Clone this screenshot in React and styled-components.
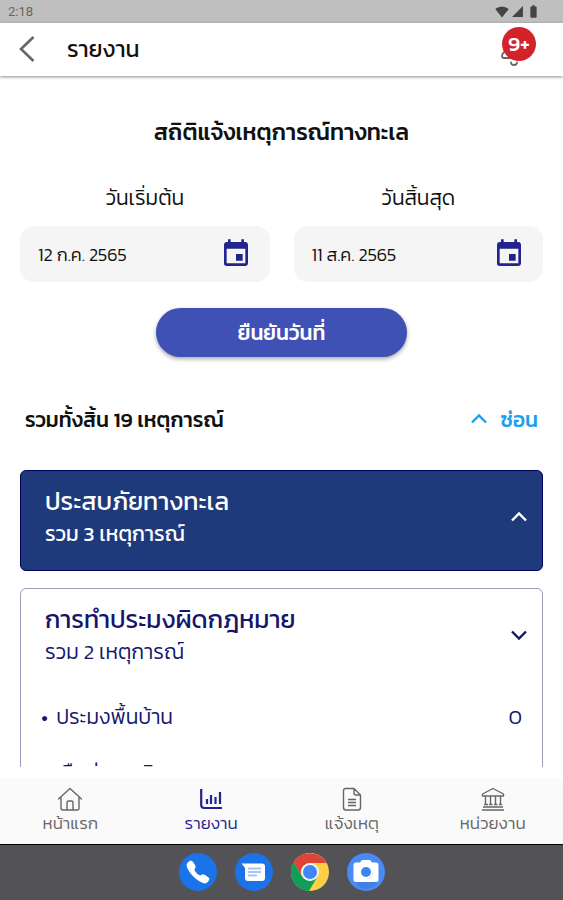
import React, { useState } from 'react'
import styled, { createGlobalStyle } from 'styled-components'
import { MdBatteryFull, MdEvent, MdSignalCellular4Bar, MdSignalWifi4Bar } from 'react-icons/md'
import { IoCall } from 'react-icons/io5'

const groups = [
  { id: 'disaster', title: 'ประสบภัยทางทะเล', total: 3, active: true, items: [] },
  {
    id: 'fishery',
    title: 'การทำประมงผิดกฎหมาย',
    total: 2,
    active: false,
    items: [
      { name: 'ประมงพื้นบ้าน', count: 0 },
      { name: 'เรือต่างชาติ', count: 0 },
    ],
  },
]

const Chevron = ({ up }) => (
  <svg width='18' height='18' viewBox='0 0 18 18' fill='none' stroke='currentColor' strokeWidth='2.4' aria-hidden='true'>
    <path d={up ? 'M2 12.5 9 5.500l7 7' : 'M2 5.500l7 7 7-7'} />
  </svg>
)

const HomeIcon = () => (
  <svg width='26' height='26' viewBox='0 0 26 26' fill='none' stroke='currentColor' strokeWidth='1.4' strokeLinejoin='round' strokeLinecap='round' aria-hidden='true'>
    <path d='M1.500 13 13 2.500 24.500 13M4 11v11q0 2 2 2h14q2 0 2-2V11M10 24v-7.500q0-1.500 1.500-1.500h3q1.500 0 1.500 1.500V24' />
  </svg>
)

const ReportIcon = () => (
  <svg width='26' height='26' viewBox='0 0 26 26' fill='none' stroke='currentColor' aria-hidden='true'>
    <path d='M3.200 3v16q0 3 3 3H24' strokeWidth='2.200' />
    <path d='M9 13v5M13 9v9M17.500 11v7M22 6v12' strokeWidth='2.200' />
  </svg>
)

const FileIcon = () => (
  <svg width='26' height='26' viewBox='0 0 26 26' fill='none' stroke='currentColor' strokeWidth='1.4' strokeLinejoin='round' aria-hidden='true'>
    <path d='M7 2.500h8l6.500 6.500v12.500q0 2.500-2.500 2.500H7q-2.500 0-2.500-2.500V5q0-2.500 2.500-2.500zM15 2.500V7q0 2 2 2h4.500M9 13.500h8M9 16.500h8M9 19.500h8' />
  </svg>
)

const BankIcon = () => (
  <svg width='26' height='26' viewBox='0 0 26 26' fill='none' stroke='currentColor' strokeWidth='1.4' strokeLinejoin='round' aria-hidden='true'>
    <path d='M2.500 8 13 2.500 23.500 8v2h-21zM5.500 10v8.500M10.500 10v8.500M15.500 10v8.500M20.500 10v8.500M4 18.500h4M9 18.500h3.500M14 18.500h3.500M19 18.500h3M3 21h20M2 24h22' />
  </svg>
)

const BellIcon = () => (
  <svg width='30' height='36' viewBox='0 0 30 36' fill='none' stroke='currentColor' strokeWidth='1.8' strokeLinecap='round' aria-hidden='true'>
    <path d='M14 4Q7 5 7 13v6q-5 3-5 6 0 2 2 2h20q2 0 2-2 0-3-5-6v-6q0-8-7-9zM11 31.500q0 2.500 3 2.500t3-2.500' />
  </svg>
)

const MessageIcon = () => (
  <svg width='38' height='38' viewBox='0 0 38 38' aria-hidden='true'>
    <circle cx='19' cy='19' r='19' fill='#1a73e8' />
    <path d='M6.500 10.500h20.500q3 0 3 3V25q0 3-3 3H13q-3 0-3-3V15z' fill='#fff' />
    <path d='M13 15.500h13M13 19h13M13 22.500h9' stroke='#a5c5f5' strokeWidth='2' />
  </svg>
)

const ChromeIcon = () => (
  <svg width='38' height='38' viewBox='0 0 38 38' aria-hidden='true'>
    <circle cx='19' cy='19' r='19' fill='#fdd045' />
    <path d='M2.500 9.500A19 19 0 0 1 35.500 10H19a9 9 0 0 0-8 13z' fill='#db4437' />
    <path d='M2.500 9.500A19 19 0 0 0 18 38l8.500-14.500A9 9 0 0 1 11.200 23.500z' fill='#109d58' />
    <circle cx='19' cy='19' r='9' fill='#f1f1f1' />
    <circle cx='19' cy='19' r='7' fill='#4285f4' />
  </svg>
)

const CameraIcon = () => (
  <svg width='38' height='38' viewBox='0 0 38 38' aria-hidden='true'>
    <circle cx='19' cy='19' r='19' fill='#4a8af4' />
    <path d='M8 28h23q-3 7-12 8-8-1-11-8z' fill='#3f7fe6' />
    <path d='M9 9.500h4l2-2.500h8l2 2.500h4q2.500 0 2.500 2.500v14.500Q31.500 29 29 29H9q-2.500 0-2.500-2.500V12Q6.500 9.500 9 9.500z' fill='#fff' />
    <circle cx='19' cy='19' r='5' fill='#3f83f3' />
    <path d='M26 19q0 6-6 7' fill='none' stroke='#d8e1ee' />
  </svg>
)

const tabs = [
  { label: 'หน้าแรก', icon: <HomeIcon /> },
  { label: 'รายงาน', icon: <ReportIcon />, active: true },
  { label: 'แจ้งเหตุ', icon: <FileIcon /> },
  { label: 'หน่วยงาน', icon: <BankIcon /> },
]

function DateField({ id, label, value }) {
  return (
    <Field>
      <label htmlFor={id}>{label}</label>
      <DateBox>
        <input id={id} type='text' defaultValue={value} />
        <button type='button' aria-label={label}>
          <MdEvent size={32} />
        </button>
      </DateBox>
    </Field>
  )
}

function Group({ title, total, active, items }) {
  return (
    <Card $active={active}>
      <CardHead type='button'>
        <span>
          <CardTitle>{title}</CardTitle>
          <CardTotal $active={active}>รวม {total} เหตุการณ์</CardTotal>
        </span>
        <Chevron up={active} />
      </CardHead>
      {items.length > 0 && (
        <ItemList>
          {items.map((item) => (
            <li key={item.name}>
              <Bullet>•</Bullet>
              <ItemName>{item.name}</ItemName>
              <span>{item.count}</span>
            </li>
          ))}
        </ItemList>
      )}
    </Card>
  )
}

function App() {
  const [open, setOpen] = useState(true)

  return (
    <Page>
      <GlobalStyle />
      <StatusBar>
        <span>2:18</span>
        <div>
          <MdSignalWifi4Bar size={14} />
          <MdSignalCellular4Bar size={13} />
          <MdBatteryFull size={15} />
        </div>
      </StatusBar>
      <Header>
        <IconButton type='button' aria-label='ย้อนกลับ'>
          <svg width='16' height='28' viewBox='0 0 16 28' fill='none' stroke='currentColor' strokeWidth='2.6' aria-hidden='true'>
            <path d='M14.500 2 2 14l12.500 12' />
          </svg>
        </IconButton>
        <h1>รายงาน</h1>
        <BellButton type='button' aria-label='การแจ้งเตือน'>
          <BellIcon />
          <Badge>9+</Badge>
        </BellButton>
      </Header>
      <Content>
        <h2>สถิติแจ้งเหตุการณ์ทางทะเล</h2>
        <Dates>
          <DateField id='start' label='วันเริ่มต้น' value='12 ก.ค. 2565' />
          <DateField id='end' label='วันสิ้นสุด' value='11 ส.ค. 2565' />
        </Dates>
        <Confirm type='button'>ยืนยันวันที่</Confirm>
        <Summary>
          <h3>รวมทั้งสิ้น 19 เหตุการณ์</h3>
          <Toggle type='button' onClick={() => setOpen(!open)}>
            <Chevron up={open} />
            {open ? 'ซ่อน' : 'แสดง'}
          </Toggle>
        </Summary>
        {open && groups.map((group) => <Group key={group.id} {...group} />)}
      </Content>
      <TabBar>
        {tabs.map((tab) => (
          <Tab key={tab.label} href='#' $active={tab.active}>
            {tab.icon}
            {tab.label}
          </Tab>
        ))}
      </TabBar>
      <Dock>
        <Phone>
          <IoCall size={26} />
        </Phone>
        <MessageIcon />
        <ChromeIcon />
        <CameraIcon />
      </Dock>
    </Page>
  )
}

export default App

const GlobalStyle = createGlobalStyle`
* {
    box-sizing: border-box;
}

body {
    margin: 0;
    background: #fff;
    color: #111;
    font-family: Kanit, Roboto, sans-serif;
}

h1, h2, h3 {
    margin: 0;
    font-weight: 500;
}

h1 {
    font-weight: 400;
}

button, input {
    border: 0;
    padding: 0;
    background: none;
    color: inherit;
    font: inherit;
}

svg {
    display: block;
    flex: none;
}
`

const Page = styled.div`
  display: flex;
  flex-direction: column;
  height: 100vh;
`

const StatusBar = styled.div`
  display: flex;
  flex: none;
  align-items: center;
  justify-content: space-between;
  height: 23px;
  padding: 0 22px 0 8px;
  background: #bfbfbf;
  color: #666;
  font: 13px Roboto, sans-serif;

  div {
    display: flex;
    align-items: center;
    gap: 2px;
    color: #444;
  }
`

const Header = styled.header`
  display: flex;
  flex: none;
  align-items: center;
  height: 53px;
  padding: 0 27px 2px 19px;
  box-shadow: 0 1px 3px rgba(0, 0, 0, 0.45);

  h1 {
    flex: 1;
    margin-left: 32px;
    font-size: 23px;
  }
`

const IconButton = styled.button`
  color: #666;
`

const BellButton = styled.button`
  position: relative;
  width: 36px;
  height: 36px;
  color: #666;
`

const Badge = styled.span`
  position: absolute;
  top: -4px;
  right: 0;
  width: 34px;
  height: 34px;
  border-radius: 50%;
  background: #d3222a;
  color: #fff;
  font-size: 21px;
  font-weight: 500;
  line-height: 34px;
  text-align: center;
`

const Content = styled.main`
  display: flex;
  flex: 1;
  flex-direction: column;
  min-height: 0;
  margin-bottom: 11px;
  padding: 40px 20px 0;
  overflow: hidden;

  h2 {
    font-size: 23px;
    line-height: 32px;
    text-align: center;
  }

  > * {
    flex: none;
  }
`

const Dates = styled.div`
  display: grid;
  grid-template-columns: repeat(2, minmax(0, 1fr));
  gap: 24px;
  margin-top: 34px;
`

const Field = styled.div`
  label {
    display: block;
    font-size: 21px;
    font-weight: 300;
    line-height: 32px;
    text-align: center;
  }
`

const DateBox = styled.div`
  display: flex;
  align-items: center;
  height: 56px;
  margin-top: 12px;
  padding: 0 18px;
  border-radius: 14px;
  background: #f5f5f5;

  input {
    flex: 1;
    min-width: 0;
    font-size: 18px;
    font-weight: 300;
    outline: none;
  }

  button {
    color: #23238e;
  }
`

const Confirm = styled.button`
  align-self: center;
  width: 48%;
  height: 49px;
  margin-top: 26px;
  border-radius: 25px;
  background: #3f51b5;
  box-shadow: 0 2px 4px rgba(0, 0, 0, 0.35);
  color: #fff;
  font-size: 21px;
  font-weight: 500;
`

const Summary = styled.div`
  display: flex;
  align-items: center;
  justify-content: space-between;
  height: 32px;
  margin: 46px 0 35px;
  padding: 0 5px;

  h3 {
    font-size: 21px;
  }
`

const Toggle = styled.button`
  display: flex;
  align-items: center;
  gap: 12px;
  color: #1c9ff0;
  font-size: 21px;
  font-weight: 500;
`

const Card = styled.section`
  margin-bottom: 17px;
  border: 1px solid ${({ $active }) => ($active ? '#00005f' : '#9c9cb8')};
  border-radius: 6px;
  background: ${({ $active }) => ($active ? '#1e3a7b' : '#fff')};
  color: ${({ $active }) => ($active ? '#fff' : '#15156b')};
`

const CardHead = styled.button`
  display: flex;
  align-items: center;
  justify-content: space-between;
  width: 100%;
  height: 99px;
  padding: 0 14px 7px 24px;
  text-align: left;
`

const CardTitle = styled.span`
  display: block;
  font-size: 25px;
  line-height: 34px;
`

const CardTotal = styled.span`
  display: block;
  font-size: 21px;
  font-weight: ${({ $active }) => ($active ? 400 : 300)};
  line-height: 32px;
`

const ItemList = styled.ul`
  margin: 0;
  padding: 0 20px;
  list-style: none;

  li {
    display: flex;
    align-items: center;
    height: 56px;
    font-size: 21px;
    font-weight: 300;
  }
`

const Bullet = styled.span`
  margin-right: 8px;
`

const ItemName = styled.span`
  flex: 1;
`

const TabBar = styled.nav`
  display: grid;
  flex: none;
  grid-template-columns: repeat(4, 1fr);
  height: 67px;
  border-bottom: 1px solid #000;
  background: #fafafa;
`

const Tab = styled.a`
  display: flex;
  flex-direction: column;
  align-items: center;
  padding-top: 8px;
  color: ${({ $active }) => ($active ? '#23238e' : '#666')};
  font-size: 17px;
  font-weight: 300;
  line-height: 22px;
  text-decoration: none;
`

const Dock = styled.footer`
  display: flex;
  flex: none;
  justify-content: center;
  gap: 18px;
  height: 55px;
  padding-top: 8px;
  background: #535256;
`

const Phone = styled.span`
  display: grid;
  place-items: center;
  width: 38px;
  height: 38px;
  border-radius: 50%;
  background: #1a73e8;
  color: #fff;
`
